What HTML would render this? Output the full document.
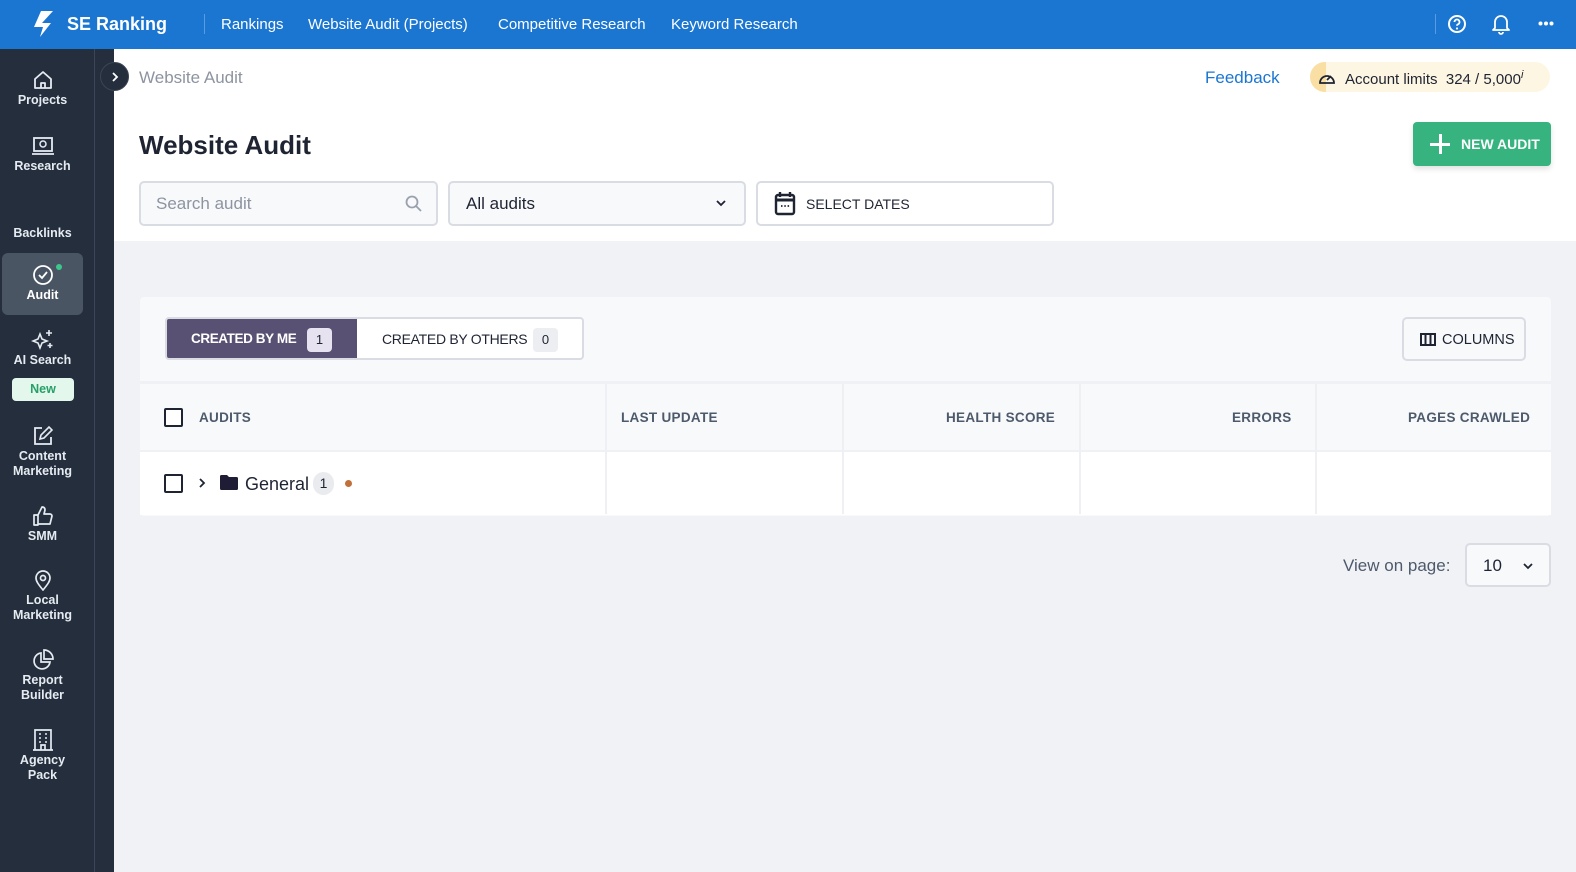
<!DOCTYPE html>
<html><head><meta charset="utf-8"><style>
*{box-sizing:border-box;margin:0;padding:0}
body{width:1576px;height:872px;overflow:hidden;font-family:"Liberation Sans",sans-serif;background:#f1f2f6;position:relative;color:#1f2433}
.abs{position:absolute}
.top{left:0;top:0;width:1576px;height:49px;background:#1b76d2;color:#fff}
.top .nav{position:absolute;top:16px;font-size:15px}
.side{left:0;top:49px;width:114px;height:823px;background:#242e3c;border-right:0}
.side .line{position:absolute;left:94px;top:0;width:1px;height:823px;background:#3a4555}
.it{position:absolute;left:0;width:85px;text-align:center;color:#e6ebf2;font-size:12.5px;font-weight:bold;line-height:15px}
.it svg{display:block;margin:0 auto 2px}
.white{left:114px;top:49px;width:1462px;height:192px;background:#fff}
.box{position:absolute;height:45px;border:2px solid #d9dce3;border-radius:5px;background:#f8f9fb}
.hdr{position:absolute;top:410px;font-size:13.5px;font-weight:bold;color:#4d5a6b;letter-spacing:.3px}
.vl{position:absolute;top:384px;width:2px;height:130px;background:#eef0f4}
.cb{position:absolute;width:19px;height:19px;border:2px solid #1f2433;border-radius:2px;background:#fff}
</style></head><body>
<div class="abs top">
 <svg class="abs" style="left:31px;top:10px" width="28" height="28" viewBox="0 0 28 28"><path d="M10 1 L22 1 L11 13 L20 13 L9 27 L12 17 L3 17 Z" fill="#fff"/></svg>
 <div class="abs" style="left:67px;top:14px;font-size:18px;font-weight:bold">SE Ranking</div>
 <div class="abs" style="left:204px;top:14px;width:1px;height:20px;background:#5a9be0"></div>
 <div class="nav" style="left:221px">Rankings</div>
 <div class="nav" style="left:308px">Website Audit (Projects)</div>
 <div class="nav" style="left:498px">Competitive Research</div>
 <div class="nav" style="left:671px">Keyword Research</div>
 <div class="abs" style="left:1435px;top:14px;width:1px;height:20px;background:#5a9be0"></div>
 <svg class="abs" style="left:1447px;top:14px" width="20" height="20" viewBox="0 0 20 20"><circle cx="10" cy="10" r="8" fill="none" stroke="#fff" stroke-width="2"/><path d="M7.5 8a2.5 2.5 0 1 1 3.5 2.3c-.7.3-1 .8-1 1.5" fill="none" stroke="#fff" stroke-width="1.8"/><circle cx="10" cy="14.5" r="1.1" fill="#fff"/></svg>
 <svg class="abs" style="left:1492px;top:13px" width="18" height="22" viewBox="0 0 18 22"><path d="M3 15V9a6 6 0 0 1 12 0v6l2 2H1z" fill="none" stroke="#fff" stroke-width="1.8" stroke-linejoin="round"/><path d="M7 19a2 2 0 0 0 4 0" fill="none" stroke="#fff" stroke-width="1.8"/></svg>
 <svg class="abs" style="left:1538px;top:21px" width="16" height="5" viewBox="0 0 16 5"><circle cx="2.5" cy="2.5" r="2" fill="#fff"/><circle cx="8" cy="2.5" r="2" fill="#fff"/><circle cx="13.5" cy="2.5" r="2" fill="#fff"/></svg>
</div>
<div class="abs side"><div class="line"></div>
 <div class="it" style="top:20px"><svg width="22" height="22" viewBox="0 0 22 22"><path d="M3 10 L11 3 L19 10 V19 H3 Z M9 19 V14 H13 V19" fill="none" stroke="#e6ebf2" stroke-width="1.8" stroke-linejoin="round"/></svg>Projects</div>
 <div class="it" style="top:86px"><svg width="24" height="22" viewBox="0 0 24 22"><rect x="3" y="3" width="18" height="13" fill="none" stroke="#e6ebf2" stroke-width="1.8"/><circle cx="12" cy="9" r="3" fill="none" stroke="#e6ebf2" stroke-width="1.5"/><path d="M1 19H23" stroke="#e6ebf2" stroke-width="1.8"/></svg>Research</div>
 <div class="it" style="top:177px">Backlinks</div>
 <div class="abs" style="left:2px;top:204px;width:81px;height:62px;background:#4a5564;border-radius:6px"></div>
 <div class="it" style="top:215px"><svg width="22" height="22" viewBox="0 0 22 22"><circle cx="11" cy="11" r="9" fill="none" stroke="#fff" stroke-width="1.8"/><path d="M7 11l3 3 5-6" fill="none" stroke="#fff" stroke-width="1.8"/></svg><span style="color:#fff">Audit</span></div>
 <div class="abs" style="left:56px;width:6px;height:6px;border-radius:3px;background:#3cc88c;top:215px"></div>
 <div class="it" style="top:280px"><svg width="24" height="22" viewBox="0 0 24 22"><path d="M9 5 L11 10 L16 12 L11 14 L9 19 L7 14 L2 12 L7 10 Z" fill="none" stroke="#e6ebf2" stroke-width="1.6"/><path d="M18 1v6M15 4h6M19 14v5M16.5 16.5h5" stroke="#e6ebf2" stroke-width="1.6"/></svg>AI Search</div>
 <div class="abs" style="left:12px;top:329px;width:62px;height:23px;background:#e3f7ec;border-radius:4px;color:#27a069;font-size:12.5px;font-weight:bold;text-align:center;line-height:23px">New</div>
 <div class="it" style="top:376px"><svg width="22" height="22" viewBox="0 0 22 22"><path d="M10 3H3V19H19V12" fill="none" stroke="#e6ebf2" stroke-width="1.8"/><path d="M8 14l1-4 8-8 3 3-8 8z" fill="none" stroke="#e6ebf2" stroke-width="1.6"/></svg>Content<br>Marketing</div>
 <div class="it" style="top:456px"><svg width="22" height="22" viewBox="0 0 22 22"><path d="M2 10h4v10H2zM6 10l4-8c2 0 3 1 3 3l-1 4h6c1 0 2 1 2 2l-2 8H6" fill="none" stroke="#e6ebf2" stroke-width="1.7" stroke-linejoin="round"/></svg>SMM</div>
 <div class="it" style="top:520px"><svg width="22" height="22" viewBox="0 0 22 22"><path d="M11 21C6 15 4 12 4 9a7 7 0 0 1 14 0c0 3-2 6-7 12z" fill="none" stroke="#e6ebf2" stroke-width="1.7"/><circle cx="11" cy="9" r="2.5" fill="none" stroke="#e6ebf2" stroke-width="1.7"/></svg>Local<br>Marketing</div>
 <div class="it" style="top:600px"><svg width="22" height="22" viewBox="0 0 22 22"><path d="M9 4a8 8 0 1 0 9 9H9z" fill="none" stroke="#e6ebf2" stroke-width="1.7"/><path d="M12 1v9h9a9 9 0 0 0-9-9z" fill="none" stroke="#e6ebf2" stroke-width="1.7"/></svg>Report<br>Builder</div>
 <div class="it" style="top:680px"><svg width="22" height="22" viewBox="0 0 22 22"><path d="M3 21V1h16v20M1 21h20M9 21v-5h4v5" fill="none" stroke="#e6ebf2" stroke-width="1.7"/><path d="M7 5h2M13 5h2M7 9h2M13 9h2M7 13h2M13 13h2" stroke="#e6ebf2" stroke-width="1.6"/></svg>Agency<br>Pack</div>
</div>
<div class="abs white"></div>
<div class="abs" style="left:100px;top:62px;width:29px;height:29px;border-radius:50%;background:#242e3c;border:1px solid #3a4555"><svg class="abs" style="left:10px;top:8px" width="8" height="12" viewBox="0 0 8 12"><path d="M2 2l4 4-4 4" fill="none" stroke="#fff" stroke-width="1.8"/></svg></div>
<div class="abs" style="left:139px;top:68px;font-size:17px;color:#8d94a0">Website Audit</div>
<div class="abs" style="left:1205px;top:68px;font-size:17px;color:#1b76d2">Feedback</div>
<div class="abs" style="left:1310px;top:62px;width:240px;height:30px;border-radius:15px;background:#fdf6e2;overflow:hidden"><div style="position:absolute;left:0;top:0;width:16px;height:30px;background:#f9dfa3"></div></div>
<svg class="abs" style="left:1318px;top:69px" width="18" height="16" viewBox="0 0 18 16"><path d="M2 14A7 7 0 1 1 16 14Z" fill="none" stroke="#1f2433" stroke-width="1.8"/><path d="M9 11l4-4" stroke="#1f2433" stroke-width="1.8"/></svg>
<div class="abs" style="left:1345px;top:69px;font-size:15px;color:#1f2433">Account limits&nbsp; 324 / 5,000<sup style="font-style:italic;font-size:11px">i</sup></div>
<div class="abs" style="left:139px;top:130px;font-size:26px;font-weight:bold;color:#1f2433">Website Audit</div>
<div class="abs" style="left:1413px;top:122px;width:138px;height:44px;background:#36b37e;border-radius:4px;box-shadow:0 3px 6px rgba(0,0,0,.12);color:#fff;font-weight:bold;font-size:14px;line-height:44px;padding-left:48px">NEW AUDIT</div>
<div class="abs" style="left:1430px;top:134px;width:20px;height:20px"><div class="abs" style="left:9px;top:0;width:2.5px;height:20px;background:#fff"></div><div class="abs" style="left:0;top:9px;width:20px;height:2.5px;background:#fff"></div></div>
<div class="box" style="left:139px;top:181px;width:299px"><span class="abs" style="left:15px;top:11px;font-size:17px;color:#8d94a0">Search audit</span>
<svg class="abs" style="left:264px;top:12px" width="18" height="18" viewBox="0 0 18 18"><circle cx="7" cy="7" r="5.5" fill="none" stroke="#9aa1ad" stroke-width="1.8"/><path d="M11 11l5 5" stroke="#9aa1ad" stroke-width="1.8"/></svg></div>
<div class="box" style="left:448px;top:181px;width:298px"><span class="abs" style="left:16px;top:11px;font-size:17px;color:#1f2433">All audits</span><svg class="abs" style="left:266px;top:17px" width="10" height="7" viewBox="0 0 10 7"><path d="M1 1l4 4 4-4" fill="none" stroke="#1f2433" stroke-width="1.8"/></svg></div>
<div class="box" style="left:756px;top:181px;width:298px;background:#fff"><svg class="abs" style="left:16px;top:8px" width="22" height="25" viewBox="0 0 22 25"><rect x="2" y="4" width="18" height="19" rx="2" fill="none" stroke="#1f2433" stroke-width="2.4"/><path d="M2 9h18" stroke="#1f2433" stroke-width="3"/><path d="M6 1v5M16 1v5" stroke="#1f2433" stroke-width="2.4"/><path d="M7 15h1.5M10.3 15h1.5M13.6 15h1.5" stroke="#1f2433" stroke-width="1.8"/></svg><span class="abs" style="left:48px;top:13px;font-size:14px;color:#1f2433">SELECT DATES</span></div>
<div class="abs" style="left:140px;top:297px;width:1411px;height:219px;background:#f8f9fb;border-radius:4px"></div>
<div class="abs" style="left:165px;top:317px;width:419px;height:43px;border:2px solid #d9dce3;border-radius:4px;background:#fff;overflow:hidden">
 <div class="abs" style="left:0;top:0;width:190px;height:41px;background:#585173"></div>
 <span class="abs" style="left:24px;top:12px;color:#fff;font-size:13.5px;font-weight:bold;letter-spacing:-.4px">CREATED BY ME</span>
 <span class="abs" style="left:140px;top:9px;width:25px;height:24px;background:#e6e2ef;border-radius:4px;text-align:center;line-height:24px;font-size:13px;color:#1f2433">1</span>
 <span class="abs" style="left:215px;top:12px;color:#1f2433;font-size:14px;letter-spacing:-.3px">CREATED BY OTHERS</span>
 <span class="abs" style="left:366px;top:9px;width:25px;height:24px;background:#eceef2;border-radius:4px;text-align:center;line-height:24px;font-size:13px;color:#1f2433">0</span>
</div>
<div class="abs" style="left:1402px;top:317px;width:124px;height:44px;border:2px solid #d9dce3;border-radius:5px;background:#f8f9fb"><svg class="abs" style="left:16px;top:14px" width="16" height="13" viewBox="0 0 16 13"><rect x="1" y="1" width="14" height="11" fill="none" stroke="#1f2433" stroke-width="2"/><path d="M5.5 1v11M10.5 1v11" stroke="#1f2433" stroke-width="2"/></svg><span class="abs" style="left:38px;top:13px;font-size:14.5px;color:#1f2433">COLUMNS</span></div>
<div class="abs" style="left:140px;top:381px;width:1411px;height:3px;background:#eff1f4"></div>
<div class="abs" style="left:140px;top:450px;width:1411px;height:2px;background:#eff1f4"></div>
<div class="abs" style="left:140px;top:452px;width:1411px;height:63px;background:#fff"></div>
<div class="vl" style="left:605px"></div><div class="vl" style="left:842px"></div><div class="vl" style="left:1079px"></div><div class="vl" style="left:1315px"></div>
<div class="cb" style="left:164px;top:408px"></div>
<div class="hdr" style="left:199px">AUDITS</div>
<div class="hdr" style="left:621px">LAST UPDATE</div>
<div class="hdr" style="left:946px">HEALTH SCORE</div>
<div class="hdr" style="left:1232px">ERRORS</div>
<div class="hdr" style="left:1408px">PAGES CRAWLED</div>
<div class="cb" style="left:164px;top:474px"></div>
<svg class="abs" style="left:198px;top:477px" width="8" height="12" viewBox="0 0 8 12"><path d="M2 2l4 4-4 4" fill="none" stroke="#1f2433" stroke-width="1.8"/></svg>
<svg class="abs" style="left:220px;top:475px" width="18" height="15" viewBox="0 0 18 15"><path d="M0 1.5a1.5 1.5 0 0 1 1.5-1.5H7l2 2h7.5A1.5 1.5 0 0 1 18 3.5v10a1.5 1.5 0 0 1-1.5 1.5h-15A1.5 1.5 0 0 1 0 13.5z" fill="#1f1d36"/></svg>
<div class="abs" style="left:245px;top:474px;font-size:18px;color:#1f2433">General</div>
<div class="abs" style="left:313px;top:472px;width:21px;height:23px;border-radius:11px;background:#e9ebef;text-align:center;line-height:23px;font-size:14px">1</div>
<div class="abs" style="left:345px;top:480px;width:7px;height:7px;border-radius:50%;background:#c07038"></div>
<div class="abs" style="left:1343px;top:556px;font-size:17px;color:#4d5a6b">View on page:</div>
<div class="abs" style="left:1465px;top:543px;width:86px;height:44px;border:2px solid #d9dce3;border-radius:5px;background:#f8f9fb"><span class="abs" style="left:16px;top:11px;font-size:17px">10</span><svg class="abs" style="left:56px;top:18px" width="10" height="7" viewBox="0 0 10 7"><path d="M1 1l4 4 4-4" fill="none" stroke="#1f2433" stroke-width="1.8"/></svg></div>
</body></html>
